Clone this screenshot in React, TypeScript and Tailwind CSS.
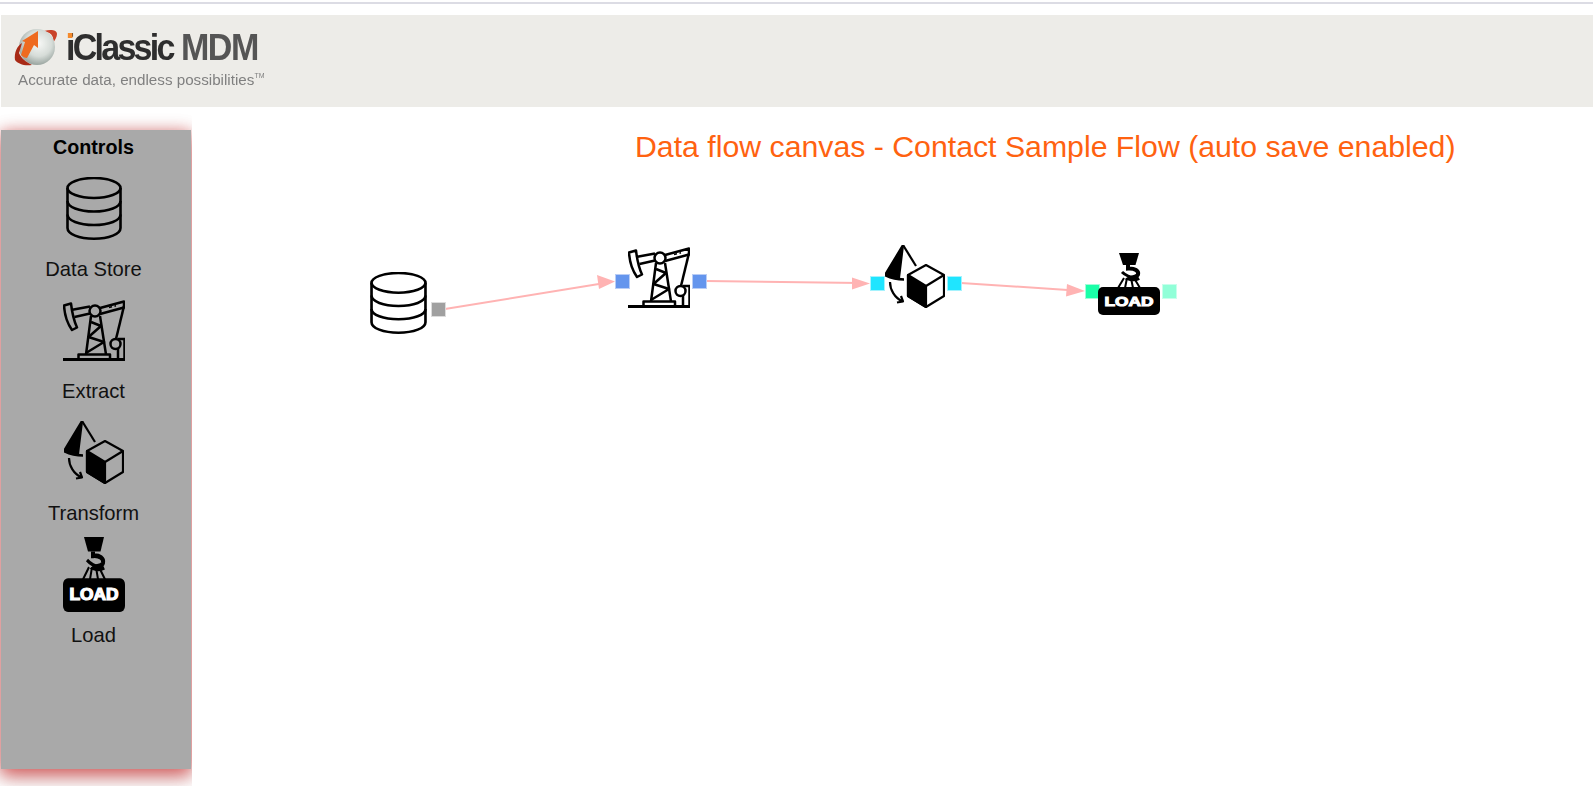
import type { ReactNode } from "react";

const FONT = "font-['Liberation_Sans',Arial,sans-serif]";

function DataStoreIcon({ className }: { className: string }) {
  return (
    <svg viewBox="0 0 56 63" className={className} preserveAspectRatio="none" fill="none" stroke="currentColor" strokeWidth="2.600">
      <ellipse cx="28" cy="11" rx="26.500" ry="10" />
      <path d="M1.500 11V51C1.500 57 13 61.700 28 61.700S54.500 57 54.500 51V11" />
      <path d="M1.500 24C1.500 30 13 34.500 28 34.500S54.500 30 54.500 24" />
      <path d="M1.500 37.500C1.500 43.500 13 48 28 48S54.500 43.500 54.500 37.500" />
    </svg>
  );
}

function ExtractIcon({ className }: { className: string }) {
  return (
    <svg viewBox="0 0 62 62" className={className} preserveAspectRatio="none" fill="none" stroke="currentColor" strokeWidth="2.500" strokeLinejoin="round">
      <path d="M0 59.500H62" strokeWidth="2.800" />
      <path d="M15.500 59V54.500H47V59" />
      <path d="M1 5.500L8 3.500C9 12 11 21 14 27.500L9 30C4 23 1.500 14 1 5.500Z" />
      <path d="M11.500 17L27 13.500" />
      <path d="M8 10L27 6.500" />
      <path d="M37 8L61 1.500V7.500L37 14" />
      <circle cx="32" cy="11" r="5.500" />
      <path d="M28 16L23 54.500M37 16L43 54.500" />
      <path d="M28 22L38 26L25.500 37L41 42L23 53" />
      <path d="M61 6L53 39" />
      <circle cx="52.500" cy="44" r="5" />
      <path d="M55 39H61.500V59.500M55 49V59" />
      <path d="M46 7.500L49 6.800M51.500 6.200L53 5.800" strokeWidth="1.500" />
    </svg>
  );
}

function TransformIcon({ className }: { className: string }) {
  return (
    <svg viewBox="0 0 60 63" className={className} preserveAspectRatio="none" fill="none" stroke="currentColor" strokeWidth="2.200" strokeLinejoin="round">
      <path d="M18 0L0 30L14 32.500Z" fill="currentColor" />
      <path d="M0 30C6 33 13 34.500 19 34.500" strokeWidth="2.600" />
      <path d="M18 0L31 21" />
      <path d="M5 37C5 45 10 53 17 56" />
      <path d="M12 57.500L18 56.500L16 51" />
      <path d="M41 20L59 30V51L41 62L23 51V30Z" />
      <path d="M23 30L41 41V62L23 51Z" fill="currentColor" />
      <path d="M41 41L59 30" />
    </svg>
  );
}

function LoadIcon({ className }: { className: string }) {
  return (
    <svg viewBox="0 0 62 62" className={className} preserveAspectRatio="none" fill="none" stroke="currentColor">
      <path d="M21 0H41L37.500 12H25Z" fill="currentColor" stroke="none" />
      <path d="M30 12V15.500C37 15 41 18 40 21.500C39 24.500 33 24 31 25.500C34 26.500 38 26.500 41 25" strokeWidth="4" />
      <path d="M24 19C27 22 33 25 36 24" strokeWidth="3" />
      <path d="M26 25L20 35M29 25L27 35M33 25L35 35M36 25L42 35" strokeWidth="2" />
      <rect x="0" y="34" width="62" height="28" rx="5" fill="currentColor" stroke="none" />
      <text
        x="31"
        y="52.500"
        textAnchor="middle"
        textLength="49"
        lengthAdjust="spacingAndGlyphs"
        fontFamily="Liberation Sans, Arial, sans-serif"
        fontWeight="700"
        fontSize="13"
        fill="#ffffff"
        stroke="#ffffff"
        strokeWidth="1"
      >
        LOAD
      </text>
    </svg>
  );
}

function ControlItem({ icon, label }: { icon: ReactNode; label: string }) {
  return (
    <div className="flex h-[122px] flex-col items-center">
      <div className="flex h-[73px] items-center justify-center">{icon}</div>
      <div className="mt-[12px] text-[20.200px] leading-[24px] text-[#111111]">{label}</div>
    </div>
  );
}

function Port({ className }: { className: string }) {
  return <div className={`absolute h-[15px] w-[15px] border ${className}`} />;
}

function Logo() {
  return (
    <div className="ml-[13px] mt-[13px] flex flex-col blur-[0.4px]">
      <div className="flex items-center">
        <svg viewBox="0 0 44 40" className="h-[40px] w-[44px]">
          <defs>
            <radialGradient id="globe" cx="0.55" cy="0.4" r="0.6">
              <stop offset="0" stopColor="#f7f8f6" />
              <stop offset="0.6" stopColor="#d6dcd8" />
              <stop offset="1" stopColor="#9aa5a0" />
            </radialGradient>
          </defs>
          <path d="M30 3C37 1 43 2 43 6C43 9 41 12 39 15C40 10 39 5 30 3Z" fill="#c9432a" />
          <circle cx="23" cy="19" r="18" fill="url(#globe)" />
          <path d="M1 32C0 25 3 18 8 15L5 25C7 30 12 34 18 37C10 38 4 36 1 32Z" fill="#a82a16" />
          <path d="M7 27L11 14L8 13L24 3L24 20L20 17L13 30C11 30 9 29 7 27Z" fill="#ee6a1f" />
        </svg>
        <div className="ml-[8px] flex origin-left scale-x-[0.92] text-[37px] font-bold leading-[40px] tracking-[-3px]">
          <span className="relative text-[#2e2e2e]">
            iClassic
            <span className="absolute left-[2px] top-[5px] h-[5px] w-[5px] bg-[#f58a2c]" />
          </span>
          <span className="ml-[9px] tracking-[-1.6px] text-[#555555]">MDM</span>
        </div>
      </div>
      <div className="ml-[4px] mt-[3px] text-[15.200px] leading-[18px] text-[#808080]">
        Accurate data, endless possibilities
        <sup className="-top-[7px] text-[7px]">TM</sup>
      </div>
    </div>
  );
}

export default function App() {
  return (
    <div className={`relative flex h-[786px] w-[1593px] flex-col overflow-hidden bg-white ${FONT}`}>
      <div className="mt-[2px] h-[2px] bg-[#dcdce4]" />
      <header className="ml-[1px] mt-[11px] h-[92px] bg-[#edece8]">
        <Logo />
      </header>

      <div className="flex min-h-0 flex-1">
        <aside className="w-[192px] shrink-0 overflow-hidden pl-[1px] pr-[1px] pt-[23px]">
          <div className="flex h-[639px] flex-col bg-[#a9a9a9] pl-0 pr-[5px] pt-[6px] shadow-[0_8px_16px_0_rgba(255,0,0,0.35),0_6px_20px_0_rgba(0,0,0,0.3),0_0_14px_0_rgba(255,0,0,0.25)]">
            <div className="text-center text-[19.700px] font-bold leading-[23px] text-black">Controls</div>
            <div className="mt-[13px]">
              <ControlItem icon={<DataStoreIcon className="h-[63px] w-[56px] text-black" />} label="Data Store" />
              <ControlItem icon={<ExtractIcon className="h-[62px] w-[62px] text-black" />} label="Extract" />
              <ControlItem icon={<TransformIcon className="h-[63px] w-[60px] text-black" />} label="Transform" />
              <ControlItem icon={<LoadIcon className="h-[75px] w-[62px] text-black" />} label="Load" />
            </div>
          </div>
        </aside>

        <main className="min-w-0 flex-1 pl-[443px] pt-[23px]">
          <h1 className="whitespace-nowrap text-[30.250px] font-normal leading-[34px] text-[#ff6210]">
            Data flow canvas - Contact Sample Flow (auto save enabled)
          </h1>
        </main>
      </div>

      {/* free canvas: node positions are the content */}
      <svg className="absolute left-0 top-0 h-[786px] w-[1593px]" viewBox="0 0 1593 786" fill="none">
        <g stroke="#ffb3b3" strokeWidth="2">
          <path d="M445 309L605 283" />
          <path d="M706 281L860 283" />
          <path d="M961 283L1075 290.500" />
        </g>
        <g fill="#ffb3b3">
          <path d="M615 281.500L597 275L599 289Z" />
          <path d="M870 283.500L852 277.500L852 289.500Z" />
          <path d="M1085 291L1067 284L1066 296.500Z" />
        </g>
      </svg>

      <DataStoreIcon className="absolute left-[370px] top-[272px] h-[62px] w-[57px] text-black" />
      <Port className="left-[431px] top-[302px] border-[#dcdcdc] bg-[#a0a0a0]" />

      <Port className="left-[615px] top-[274px] border-[#b9cdf5] bg-[#6495ed]" />
      <ExtractIcon className="absolute left-[628px] top-[247px] h-[62px] w-[62px] text-black" />
      <Port className="left-[692px] top-[274px] border-[#b9cdf5] bg-[#6495ed]" />

      <Port className="left-[870px] top-[276px] border-[#a5f2fd] bg-[#1fe5ff]" />
      <TransformIcon className="absolute left-[885px] top-[245px] h-[63px] w-[60px] text-black" />
      <Port className="left-[947px] top-[276px] border-[#a5f2fd] bg-[#1fe5ff]" />

      <Port className="left-[1085px] top-[284px] border-[#a0fdd9] bg-[#1affa8]" />
      <LoadIcon className="absolute left-[1098px] top-[253px] h-[62px] w-[62px] text-black" />
      <Port className="left-[1162px] top-[284px] border-[#c8ffec] bg-[#91ffd8]" />
    </div>
  );
}
